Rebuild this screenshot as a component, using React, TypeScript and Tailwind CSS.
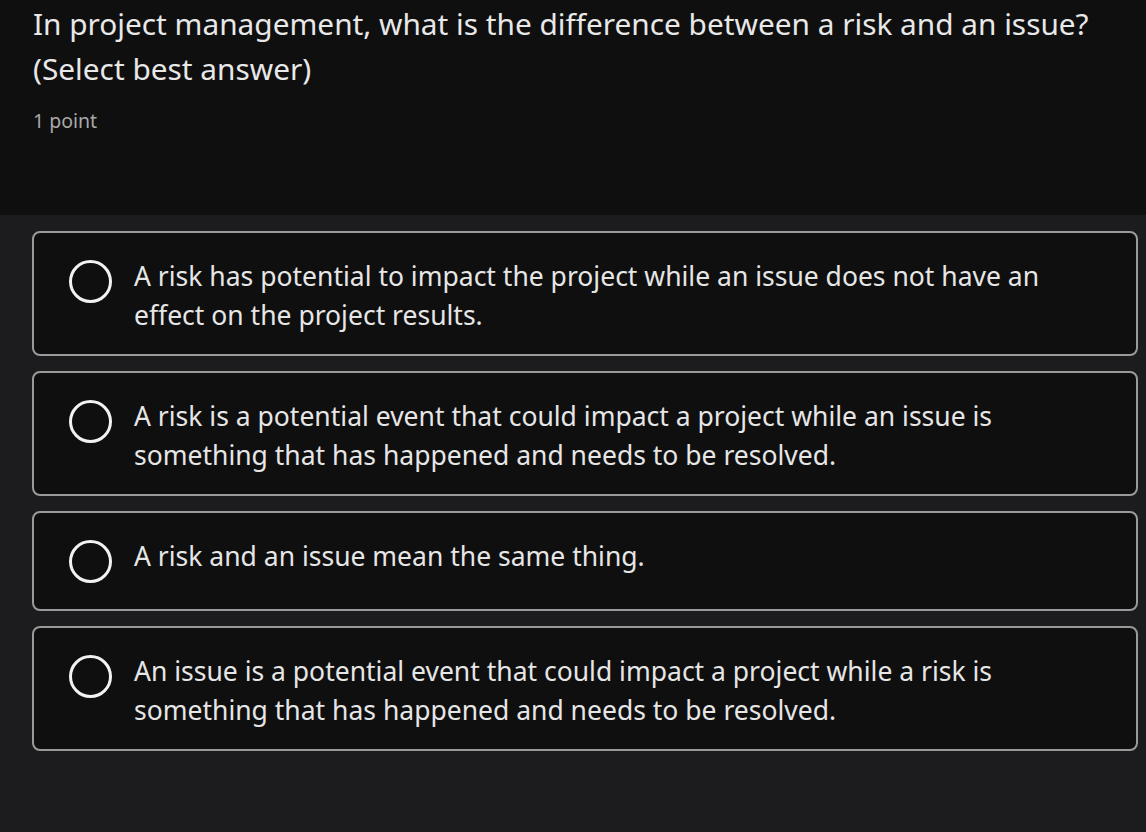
const OPTIONS = [
  'A risk has potential to impact the project while an issue does not have an effect on the project results.',
  'A risk is a potential event that could impact a project while an issue is something that has happened and needs to be resolved.',
  'A risk and an issue mean the same thing.',
  'An issue is a potential event that could impact a project while a risk is something that has happened and needs to be resolved.',
];

export default function App() {
  return (
    <div className="flex min-h-[832px] w-full flex-col bg-[#1c1c1e]" style={{ fontFamily: '"Noto Sans", Lato, sans-serif' }}>
      {/* Question header */}
      <header className="h-[215px] bg-[#0f0f0f] px-[33px] pt-[1px]">
        <h1 className="max-w-[1095px] text-[29.8px] leading-[45px] font-normal text-[#e8e8e8]">
          In project management, what is the difference between a risk and an issue? (Select best answer)
        </h1>
        <p className="mt-[15px] text-[19.5px] leading-[30px] text-[#a8a8a8]">1 point</p>
      </header>

      {/* Answer options */}
      <main className="flex flex-col gap-[15px] pt-[16px] pr-[8px] pl-[32px]">
        {OPTIONS.map((text) => (
          <label
            key={text}
            className="flex cursor-pointer items-start rounded-[8px] border-2 border-[#9a9a9a] bg-[#0f0f0f] pt-[24px] pb-[19px] pl-[35px] pr-[40px]"
          >
            <span className="flex h-[53px] w-[65px] shrink-0 items-start pt-[3px]">
              <span className="h-[43px] w-[43px] rounded-full border-[3px] border-[#f2f2f2]" />
            </span>
            <span className="text-[26.5px] leading-[39px] text-[#e6e6e6]">{text}</span>
          </label>
        ))}
      </main>
    </div>
  );
}
